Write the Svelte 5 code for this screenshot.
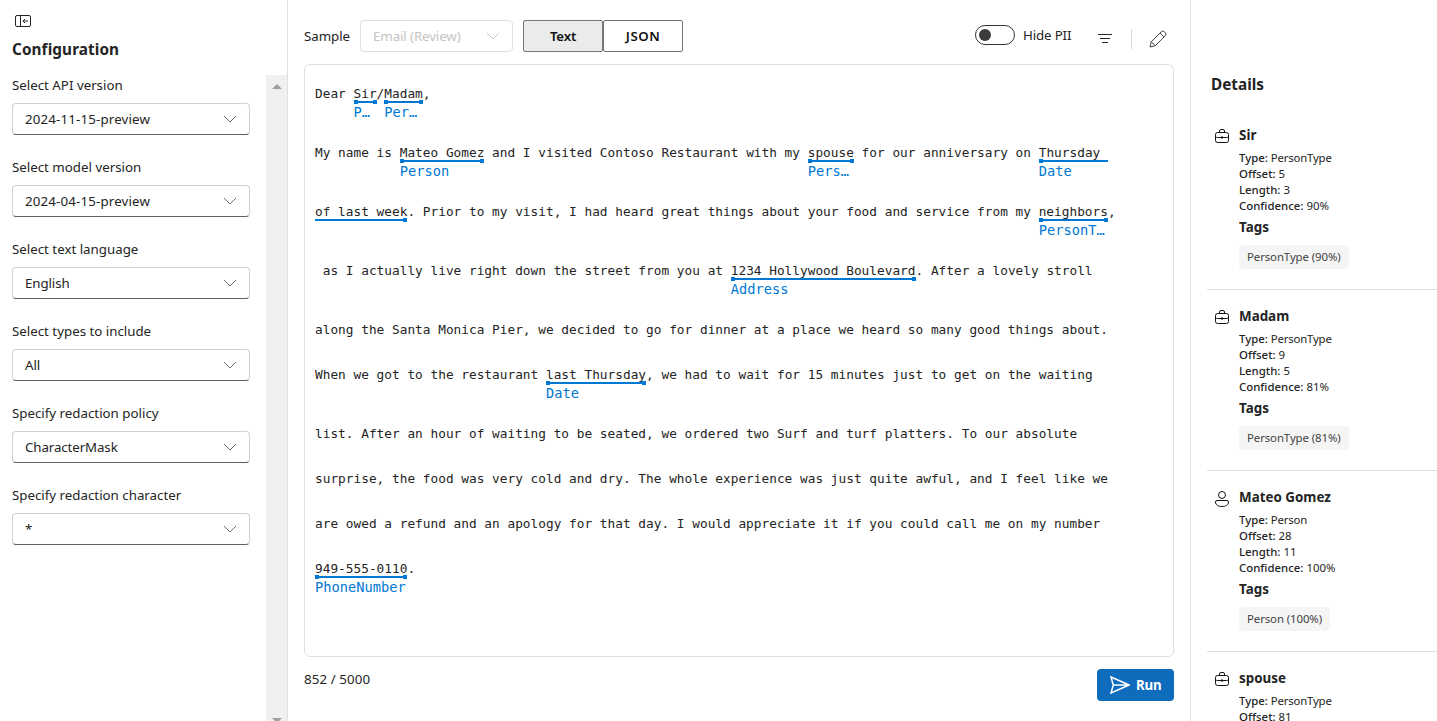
<script>
  const fields = [
    { label: 'Select API version', value: '2024-11-15-preview' },
    { label: 'Select model version', value: '2024-04-15-preview' },
    { label: 'Select text language', value: 'English' },
    { label: 'Select types to include', value: 'All' },
    { label: 'Specify redaction policy', value: 'CharacterMask' },
    { label: 'Specify redaction character', value: '*' }
  ];

  // Each line is a list of segments; tagged segments carry an underline and a label.
  const lines = [
    [{ t: 'Dear ' }, { t: 'Sir', tag: 'P…' }, { t: '/' }, { t: 'Madam', tag: 'Per…' }, { t: ',' }],
    [
      { t: 'My name is ' }, { t: 'Mateo Gomez', tag: 'Person' },
      { t: ' and I visited Contoso Restaurant with my ' }, { t: 'spouse', tag: 'Pers…' },
      { t: ' for our anniversary on ' }, { t: 'Thursday ', tag: 'Date', open: 'end' }
    ],
    [
      { t: 'of last week', tag: ' ', open: 'start' },
      { t: '. Prior to my visit, I had heard great things about your food and service from my ' },
      { t: 'neighbors', tag: 'PersonT…' }, { t: ',' }
    ],
    [
      { t: ' as I actually live right down the street from you at ' },
      { t: '1234 Hollywood Boulevard', tag: 'Address' }, { t: '. After a lovely stroll' }
    ],
    [{ t: 'along the Santa Monica Pier, we decided to go for dinner at a place we heard so many good things about.' }],
    [
      { t: 'When we got to the restaurant ' }, { t: 'last Thursday', tag: 'Date' },
      { t: ', we had to wait for 15 minutes just to get on the waiting' }
    ],
    [{ t: 'list. After an hour of waiting to be seated, we ordered two Surf and turf platters. To our absolute' }],
    [{ t: 'surprise, the food was very cold and dry. The whole experience was just quite awful, and I feel like we' }],
    [{ t: 'are owed a refund and an apology for that day. I would appreciate it if you could call me on my number' }],
    [{ t: '949-555-0110', tag: 'PhoneNumber' }, { t: '.' }]
  ];

  const entities = [
    { name: 'Sir', type: 'PersonType', offset: 5, length: 3, confidence: '90%' },
    { name: 'Madam', type: 'PersonType', offset: 9, length: 5, confidence: '81%' },
    { name: 'Mateo Gomez', type: 'Person', offset: 28, length: 11, confidence: '100%' },
    { name: 'spouse', type: 'PersonType', offset: 81 }
  ];
</script>

{#snippet chevron()}
  <svg class="chevron" width="14" height="8" viewBox="0 0 14 8"><path d="M1 1l6 6 6-6" /></svg>
{/snippet}

<div class="page">
  <aside class="config">
    <svg class="collapse" width="16" height="12" viewBox="0 0 16 12">
      <rect x=".5" y=".5" width="15" height="11" rx="1.5" /><path d="M5.5 .5v11M13 6H8M10 4L8 6l2 2" />
    </svg>
    <h2>Configuration</h2>
    <div class="scroll">
      <div class="fields">
        {#each fields as f}
          <div class="field">
            <span class="label">{f.label}</span>
            <div class="select"><span class:version={f.value.startsWith('20')}>{f.value}</span>{@render chevron()}</div>
          </div>
        {/each}
      </div>
      <div class="bar"><i class="up"></i><i class="down"></i></div>
    </div>
  </aside>

  <main>
    <div class="toolbar">
      <span class="sample">Sample</span>
      <div class="select disabled"><span>Email (Review)</span>{@render chevron()}</div>
      <div class="tabs"><button class="on">Text</button><button>JSON</button></div>
      <div class="actions">
        <span class="toggle"><i></i></span>
        <span class="hide">Hide PII</span>
        <svg class="filter" width="14" height="10" viewBox="0 0 14 10"><path d="M0 .5h14M2 4.5h10M4 8.5h6" /></svg>
        <span class="sep"></span>
        <svg class="pencil" width="18" height="18" viewBox="0 0 18 18">
          <path d="M1 17l1.300-5.300L12.200 1.800a2.300 2.300 0 0 1 3.200 0l.8.8a2.300 2.300 0 0 1 0 3.200L6.300 15.700zM2.300 11.700l4 4M11 3l4 4" />
        </svg>
      </div>
    </div>

    <section class="doc">
      {#each lines as line}
        <div class="line" class:tagged={line.some((s) => s.tag)}>
          {#each line as s}
            {#if s.tag}
              <span class="entity {s.open ?? ''}"><span>{s.t}</span><em>{s.tag}</em></span>
            {:else}<span>{s.t}</span>{/if}
          {/each}
        </div>
      {/each}
    </section>

    <footer>
      <span class="count">852 / 5000</span>
      <button class="run">
        <svg width="20" height="18" viewBox="0 0 20 18"><path d="M1 1l18 8L1 17l2.300-8zM3.300 9H19" /></svg>
        <span>Run</span>
      </button>
    </footer>
  </main>

  <aside class="details">
    <h2>Details</h2>
    {#each entities as e}
      <article>
        {#if e.type === 'Person'}
          <svg class="icon person" width="14" height="16" viewBox="0 0 14 16">
            <circle cx="7" cy="4" r="3.500" /><path d="M2 9.500h10a1.500 1.500 0 0 1 1.500 1.500c0 3-3 4.500-6.500 4.500S.5 14 .5 11A1.500 1.500 0 0 1 2 9.500z" />
          </svg>
        {:else}
          <svg class="icon case" width="14" height="14" viewBox="0 0 14 14">
            <rect x=".5" y="3.500" width="13" height="10" rx="2" />
            <path d="M4.500 3.500V2A1.500 1.500 0 0 1 6 .5h2A1.500 1.500 0 0 1 9.500 2v1.500M.5 7c0 1 .8 1.500 1.800 1.500h9.400c1 0 1.800-.5 1.800-1.500M7 7v3" />
          </svg>
        {/if}
        <div class="info">
          <h3>{e.name}</h3>
          <p><b>Type:</b> <span>{e.type}</span></p>
          <p><b>Offset:</b> {e.offset}</p>
          {#if e.confidence}
            <p><b>Length:</b> {e.length}</p>
            <p><b>Confidence:</b> {e.confidence}</p>
            <h4>Tags</h4>
            <span class="chip">{e.type} ({e.confidence})</span>
          {/if}
        </div>
      </article>
    {/each}
  </aside>
</div>

<style>
  :global(body) { margin: 0; background: #fff; overflow: hidden; }
  .page {
    display: flex; width: 1437px; height: 721px; overflow: hidden;
    font: 13.3px/20px 'Noto Sans', sans-serif; color: #242424;
  }
  .page * { box-sizing: border-box; }
  svg { fill: none; stroke: #242424; flex: none; }
  h2, h3, h4, p { margin: 0; }
  h2 { font-size: 15.3px; line-height: 22px; font-weight: 700; letter-spacing: .1px; }
  button { font: inherit; }

  .config { width: 288px; border-right: 1px solid #e0e0e0; display: flex; flex-direction: column; flex: none; }
  .collapse { margin: 15px 0 0 15px; }
  .config h2 { margin: 11px 0 15px 12px; }
  .scroll { display: flex; flex: 1; justify-content: space-between; }
  .fields { width: 238px; margin-left: 12px; display: flex; flex-direction: column; gap: 22px; }
  .field { display: flex; flex-direction: column; gap: 8px; }
  .select {
    height: 32px; border: 1px solid #d1d1d1; border-bottom-color: #616161; border-radius: 4px;
    display: flex; align-items: center; justify-content: space-between; padding: 0 12px;
    letter-spacing: -.1px;
  }
  .version { letter-spacing: .16px; }
  .chevron { stroke: #707070; }
  .bar { width: 21px; background: #f0f0f0; display: flex; flex-direction: column; justify-content: space-between; align-items: center; }
  .bar i { border: 5px solid transparent; border-top: 0; border-bottom: 5px solid #a0a0a0; margin-top: 9px; }
  .bar .down { border-bottom: 0; border-top: 5px solid #a0a0a0; margin: 0 0 -2px; }

  main { width: 903px; flex: none; border-right: 1px solid #e0e0e0; padding: 20px 16px 0; }
  .toolbar { height: 32px; display: flex; align-items: center; }
  .sample { width: 56px; letter-spacing: -.05px; }
  .disabled { width: 153px; border-color: #e0e0e0; color: #c4c4c4; }
  .disabled .chevron { stroke: #c4c4c4; }
  .tabs { display: flex; margin-left: 10px; }
  .tabs button {
    width: 80px; height: 32px; padding: 0; border: 1px solid #767676; border-radius: 2px;
    background: #fff; color: #111; font-weight: 600;
  }
  .tabs .on { background: #ebebeb; letter-spacing: -.2px; }
  .tabs button + button { letter-spacing: .5px; }
  .actions { margin-left: auto; display: flex; align-items: center; padding-right: 7px; }
  .toggle { width: 40px; height: 20px; border: 1px solid #333; border-radius: 10px; padding: 3px; margin-top: -2px; }
  .toggle i { display: block; width: 12px; height: 12px; border-radius: 50%; background: #3b3b3b; }
  .hide { margin: -2px 0 0 8px; width: 75px; letter-spacing: -.15px; }
  .filter { margin-top: 5px; }
  .sep { width: 1px; height: 20px; background: #d8d8d8; margin: 6px 17px 0 19px; }
  .pencil { margin-top: 6px; stroke: #444; }

  .doc {
    height: 593px; margin-top: 12px; border: 1px solid #e0e0e0; border-radius: 6px; padding: 19px 10px 17px;
    font: 12.785px/20px 'DejaVu Sans Mono', monospace; letter-spacing: .013px;
  }
  .line { display: flex; height: 45px; white-space: pre; }
  .line.tagged { height: 59px; }
  .entity { position: relative; display: flex; flex-direction: column; height: 40px; }
  .entity > span { height: 20px; }
  .entity em {
    font-style: normal; font-size: 13.7px; line-height: 18px; height: 20px; width: 0; color: #0078d4; margin-top: -1px;
  }
  .entity::before {
    content: ''; position: absolute; left: 0; right: 0; top: 16px; height: 4px;
    background: linear-gradient(#0078d4, #0078d4) 0 0 / 4px 4px no-repeat,
      linear-gradient(#0078d4, #0078d4) 100% 0 / 4px 4px no-repeat,
      linear-gradient(#0078d4, #0078d4) 0 1px / 100% 2px no-repeat;
  }
  .entity.start::before { background-size: 0 0, 4px 4px, 100% 2px; }
  .entity.end::before { background-size: 4px 4px, 0 0, 100% 2px; }

  footer { display: flex; justify-content: space-between; padding-top: 12px; }
  .count { letter-spacing: .1px; }
  .run {
    width: 77px; height: 32px; border: 0; border-radius: 4px; background: #0f6cbd; color: #fff; padding: 0 0 0 13px;
    font-weight: 700; display: flex; align-items: center; gap: 6px; letter-spacing: -.2px;
  }
  .run svg { stroke: #fff; stroke-width: 1.5; }

  .details { flex: 1; padding: 73px 0 0 16px; min-width: 0; }
  .details h2 { padding-left: 4px; margin-bottom: 14px; letter-spacing: 0; }
  article { height: 181px; border-bottom: 1px solid #e0e0e0; display: flex; padding: 16px 0 0 8px; gap: 10px; }
  .icon { stroke: #111; }
  .person, .case { margin-top: 4px; }
  h3, h4 { font-size: 13.4px; line-height: 20px; font-weight: 700; }
  h3 { margin-bottom: 5px; }
  p { font-size: 11.4px; line-height: 16px; }
  p span { letter-spacing: -.2px; }
  b { font-weight: 500; }
  h4 { margin: 3px 0 8px; }
  .chip {
    display: inline-block; height: 24px; line-height: 24px; padding: 0 8px; border-radius: 4px;
    background: #f5f5f5; color: #424242; font-size: 11.4px; letter-spacing: -.09px; white-space: nowrap;
  }
</style>
